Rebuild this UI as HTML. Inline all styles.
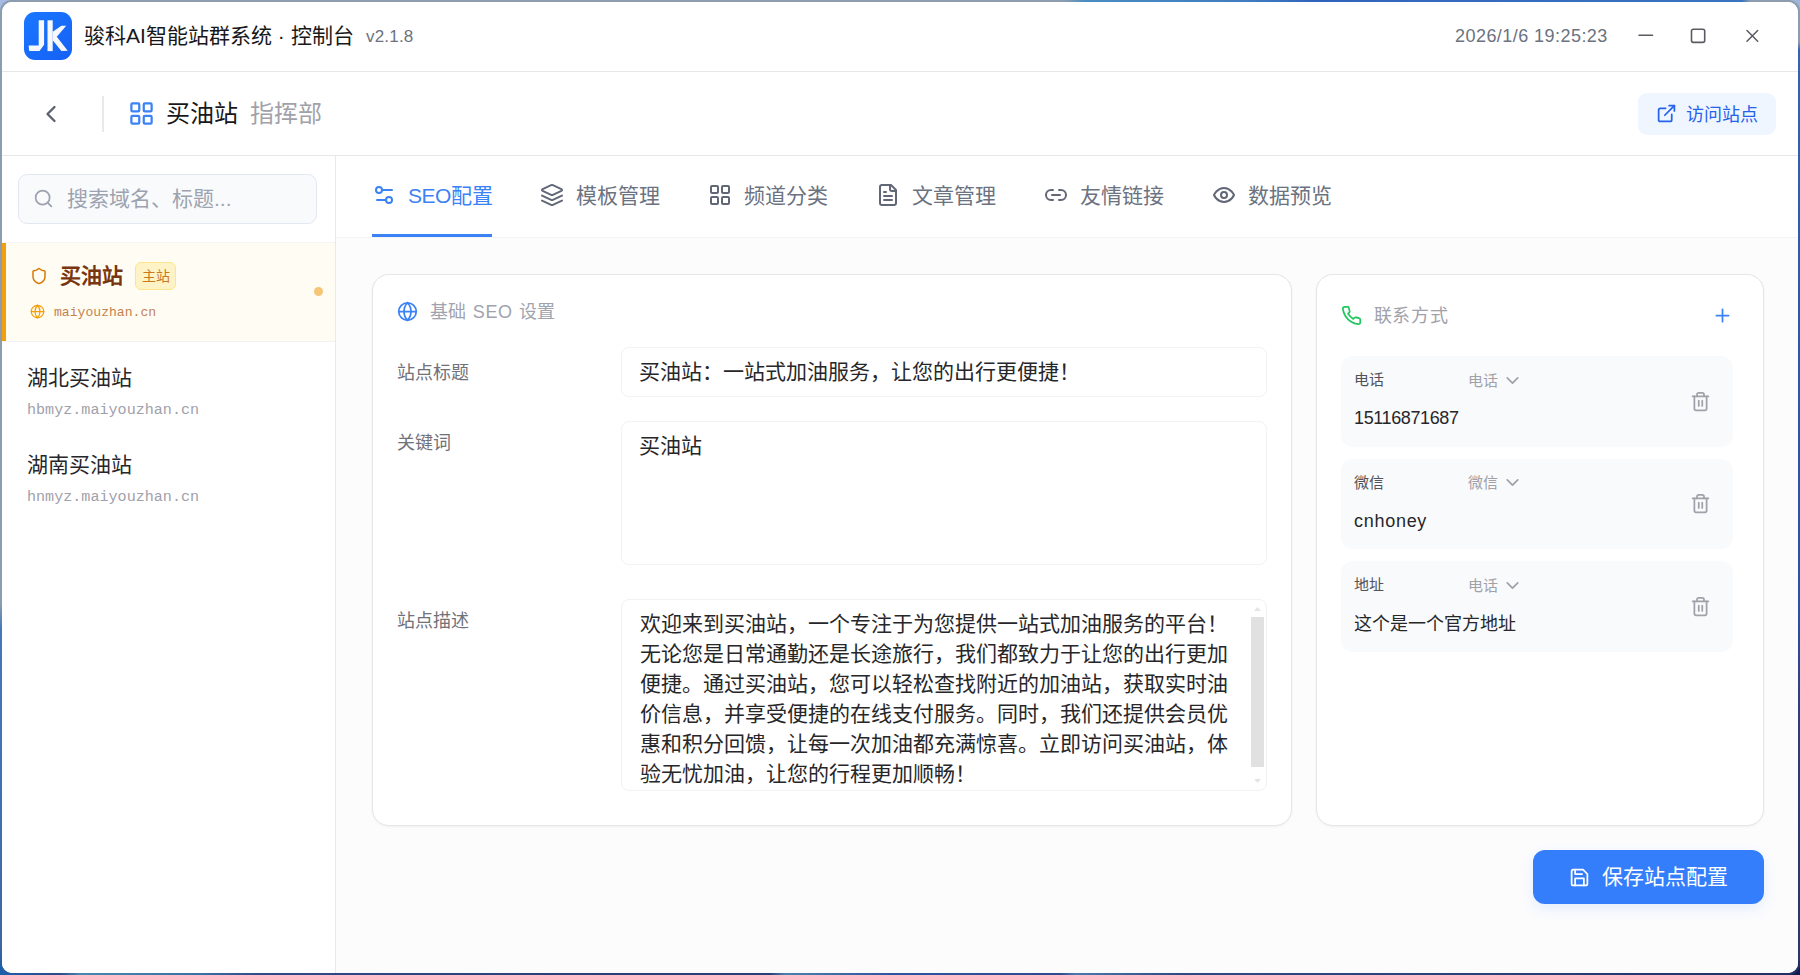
<!DOCTYPE html>
<html lang="zh-CN">
<head>
<meta charset="utf-8">
<title>骏科AI智能站群系统 · 控制台</title>
<style>
*{box-sizing:border-box;margin:0;padding:0}
html,body{width:1800px;height:975px;overflow:hidden}
body{font-family:"Liberation Sans",sans-serif;color:#18181b;position:relative;background:
 linear-gradient(#a5bbe3,#a5bbe3) 0 0/14px 14px no-repeat,
 linear-gradient(#9db5d8,#9db5d8) 100% 0/14px 14px no-repeat,
 linear-gradient(#1d5fa8,#1d5fa8) 0 100%/14px 14px no-repeat,
 linear-gradient(#0e1c52,#0e1c52) 100% 100%/14px 14px no-repeat,#fff}
.frame{left:0;top:0;width:1800px;height:975px;border-radius:11.5px;overflow:hidden}
.abs{position:absolute}
svg{display:block}
.ic{fill:none;stroke:currentColor;stroke-width:2;stroke-linecap:round;stroke-linejoin:round}
/* desktop wallpaper strips visible around window */
.bg-top{left:0;top:0;width:1800px;height:14px;background:linear-gradient(90deg,#8b9dae 0,#8b9dae 1065px,#4a8cc2 1085px,#3f7cc0 1250px,#2f62bb 1320px,#3468bd 1400px,#3a74c0 1742px,#8b9dae 1750px,#8b9dae 1800px)}
.bg-left{left:0;top:14px;width:14px;height:961px;background:linear-gradient(180deg,#8b9dae 0,#8b9dae 590px,#4478b8 615px,#4170b0 800px,#3f669f 930px,#1f5fa8 961px)}
.bg-right{left:1786px;top:14px;width:14px;height:961px;background:linear-gradient(180deg,#8b9dae 0,#8b9dae 28px,#3561b8 36px,#2f56b0 300px,#2e4fa6 600px,#2a3f7c 700px,#28366a 961px)}
.bg-bottom{left:0;top:961px;width:1800px;height:14px;background:linear-gradient(90deg,#1f5fa8 0,#2b4a8c 60px,#4a86b0 80px,#3a70a8 200px,#2c4a8c 260px,#2a3f78 600px,#2a3f78 770px,#4a80b0 785px,#2f55a0 890px,#2c4a90 1060px,#4a78b0 1075px,#2c4a86 1180px,#27407a 1500px,#222f63 1800px)}
.win{left:2px;top:2px;width:1796px;height:971px;background:#fff;border-radius:10px;overflow:hidden}
.t{position:absolute;white-space:nowrap;line-height:1}
</style>
</head>
<body>
<div class="abs frame">
<div class="abs bg-top"></div>
<div class="abs bg-left"></div>
<div class="abs bg-right"></div>
<div class="abs bg-bottom"></div>
</div>
<div class="abs win" id="win">

<div class="abs" style="left:0;top:0;width:1796px;height:70px;background:#fff;border-bottom:1px solid #e5e7eb"></div>
<svg class="abs" style="left:22px;top:10px" width="48" height="48" viewBox="0 0 48 48">
  <defs><linearGradient id="lg" x1="0" y1="0" x2="1" y2="1"><stop offset="0" stop-color="#1a78ff"/><stop offset="1" stop-color="#1560f6"/></linearGradient></defs>
  <rect width="48" height="48" rx="11" fill="url(#lg)"/>
  <polygon points="14.7,8.3 20.1,8.3 20.1,32.8 15.5,39.1 5.2,39.1 4.6,33.4 14.7,33.4" fill="#f7f8fb"/>
  <rect x="23.5" y="8.3" width="5.2" height="30.8" fill="#f7f8fb"/>
  <polygon points="28.7,19.8 37.4,13.8 42.2,13.8 32.8,24.7 28.7,26.5" fill="#f7f8fb"/>
  <polygon points="28.7,24.9 32.8,24.7 43.7,38.8 37.4,39.1 28.7,28.2" fill="#f7f8fb"/>
</svg>
<div class="t" style="left:82px;top:22px;font-size:21px;line-height:24px;color:#18181b">骏科AI智能站群系统 · 控制台</div>
<div class="t" style="left:364px;top:23px;font-size:17px;line-height:24px;color:#6b7280;letter-spacing:.2px">v2.1.8</div>
<div class="t" id="clock" style="left:1453px;top:22px;font-size:18px;line-height:24px;color:#6b7280;letter-spacing:.45px">2026/1/6 19:25:23</div>
<svg class="abs" style="left:1634px;top:24px;color:#5b5b63" width="18" height="18" viewBox="0 0 18 18"><path d="M3 9.3H16.5" fill="none" stroke="currentColor" stroke-width="1.6" stroke-linecap="round"/></svg>
<svg class="abs" style="left:1687px;top:24px;color:#5b5b63" width="18" height="18" viewBox="0 0 18 18"><rect x="2.5" y="3.2" width="13.2" height="13.2" rx="1.8" fill="none" stroke="currentColor" stroke-width="1.6"/></svg>
<svg class="abs" style="left:1741px;top:24px;color:#5b5b63" width="18" height="18" viewBox="0 0 18 18"><path d="M4 4.5 L14.7 15.2 M14.7 4.5 L4 15.2" fill="none" stroke="currentColor" stroke-width="1.5" stroke-linecap="round"/></svg>


<div class="abs" style="left:0;top:70px;width:1796px;height:84px;background:#fff;border-bottom:1px solid #e5e7eb"></div>
<svg class="abs ic" style="left:35px;top:98px;color:#5a6170" width="28" height="28" viewBox="0 0 24 24"><path d="m15 18-6-6 6-6"/></svg>
<div class="abs" style="left:100px;top:94px;width:2px;height:36px;background:#e7e9ed"></div>
<svg class="abs ic" style="left:126px;top:98.2px;color:#3b82f6" width="27" height="27" viewBox="0 0 24 24"><rect width="7" height="7" x="3" y="3" rx="1"/><rect width="7" height="7" x="14" y="3" rx="1"/><rect width="7" height="7" x="14" y="14" rx="1"/><rect width="7" height="7" x="3" y="14" rx="1"/></svg>
<div class="t" style="left:164px;top:96.4px;font-size:24px;line-height:32px;color:#18181b">买油站</div>
<div class="t" style="left:248px;top:96.4px;font-size:24px;line-height:32px;color:#a1a1aa">指挥部</div>
<div class="abs" style="left:1636px;top:91px;width:138px;height:42px;border-radius:9px;background:#eff6ff"></div>
<svg class="abs ic" style="left:1654px;top:101px;color:#2563eb" width="21" height="21" viewBox="0 0 24 24"><path d="M15 3h6v6"/><path d="M10 14 21 3"/><path d="M18 13v6a2 2 0 0 1-2 2H5a2 2 0 0 1-2-2V8a2 2 0 0 1 2-2h6"/></svg>
<div class="t" style="left:1684px;top:100.6px;font-size:18px;line-height:24px;color:#2563eb">访问站点</div>


<div class="abs" style="left:0;top:154px;width:334px;height:817px;background:#fff;border-right:1px solid #e7e9ee"></div>
<div class="abs" style="left:16px;top:172px;width:299px;height:50px;border-radius:9px;background:#f8fafc;border:1px solid #e2e8f0"></div>
<svg class="abs ic" style="left:31px;top:186px;color:#9ca3af" width="21" height="21" viewBox="0 0 24 24"><circle cx="11" cy="11" r="8"/><path d="m21 21-4.3-4.3"/></svg>
<div class="t" style="left:65px;top:185px;font-size:21px;line-height:24px;color:#9ca3af">搜索域名、标题...</div>

<div class="abs" style="left:0;top:240px;width:333px;height:100px;background:#fffdf3;border-top:1px solid #f4f5f7;border-bottom:1px solid #f1f2f5"></div>
<div class="abs" style="left:0;top:241px;width:4px;height:98px;background:#f59e0b"></div>
<svg class="abs ic" style="left:28px;top:264.5px;color:#d97706" width="18" height="18" viewBox="0 0 24 24"><path d="M20 13c0 5-3.5 7.5-7.66 8.95a1 1 0 0 1-.67-.01C7.5 20.5 4 18 4 13V6a1 1 0 0 1 1-1c2 0 4.5-1.2 6.24-2.72a1.17 1.17 0 0 1 1.52 0C14.51 3.81 17 5 19 5a1 1 0 0 1 1 1z"/></svg>
<div class="t" style="left:58px;top:262px;font-size:21px;line-height:24px;font-weight:bold;color:#78350f">买油站</div>
<div class="abs" style="left:133px;top:260px;width:41px;height:28px;border-radius:6px;background:#fef3c7;border:1px solid #fde68a"></div>
<div class="t" style="left:139.5px;top:264px;font-size:14px;line-height:20px;color:#c9781c">主站</div>
<svg class="abs ic" style="left:28px;top:302px;color:#f59e0b" width="15" height="15" viewBox="0 0 24 24"><circle cx="12" cy="12" r="10"/><path d="M12 2a14.5 14.5 0 0 0 0 20 14.5 14.5 0 0 0 0-20"/><path d="M2 12h20"/></svg>
<div class="t" style="left:52px;top:301.5px;font-family:'Liberation Mono',monospace;font-size:13.1px;line-height:18px;color:#c5824f">maiyouzhan.cn</div>
<div class="abs" style="left:312px;top:285px;width:9px;height:9px;border-radius:50%;background:#f7c577"></div>

<div class="t" style="left:25px;top:364px;font-size:21px;line-height:24px;color:#27272a">湖北买油站</div>
<div class="t" style="left:25px;top:397.5px;font-family:'Liberation Mono',monospace;font-size:15.1px;line-height:20px;color:#a1a1aa">hbmyz.maiyouzhan.cn</div>
<div class="t" style="left:25px;top:451px;font-size:21px;line-height:24px;color:#27272a">湖南买油站</div>
<div class="t" style="left:25px;top:484.5px;font-family:'Liberation Mono',monospace;font-size:15.1px;line-height:20px;color:#a1a1aa">hnmyz.maiyouzhan.cn</div>


<div class="abs" style="left:334px;top:154px;width:1462px;height:817px;background:#fcfcfd"></div>
<div class="abs" style="left:334px;top:154px;width:1462px;height:82px;background:#fff;border-bottom:1px solid #f3f4f6"></div>
<svg class="abs ic" style="left:370px;top:181px;color:#3b82f6" width="24" height="24" viewBox="0 0 24 24"><path d="M20 7h-9"/><path d="M14 17H5"/><circle cx="17" cy="17" r="3"/><circle cx="7" cy="7" r="3"/></svg>
<div class="t" style="left:406px;top:181.6px;font-size:21px;line-height:24px;color:#3b82f6"><span style="letter-spacing:-.55px">SEO</span>配置</div>
<svg class="abs ic" style="left:538px;top:181px;color:#616776" width="24" height="24" viewBox="0 0 24 24"><path d="m12.83 2.18a2 2 0 0 0-1.66 0L2.6 6.08a1 1 0 0 0 0 1.83l8.58 3.91a2 2 0 0 0 1.66 0l8.58-3.9a1 1 0 0 0 0-1.83Z"/><path d="m22 17.65-9.17 4.16a2 2 0 0 1-1.66 0L2 17.65"/><path d="m22 12.65-9.17 4.16a2 2 0 0 1-1.66 0L2 12.65"/></svg>
<div class="t" style="left:574px;top:181.6px;font-size:21px;line-height:24px;color:#6b7280">模板管理</div>
<svg class="abs ic" style="left:706px;top:181px;color:#616776" width="24" height="24" viewBox="0 0 24 24"><rect width="7" height="7" x="3" y="3" rx="1"/><rect width="7" height="7" x="14" y="3" rx="1"/><rect width="7" height="7" x="14" y="14" rx="1"/><rect width="7" height="7" x="3" y="14" rx="1"/></svg>
<div class="t" style="left:742px;top:181.6px;font-size:21px;line-height:24px;color:#6b7280">频道分类</div>
<svg class="abs ic" style="left:874px;top:181px;color:#616776" width="24" height="24" viewBox="0 0 24 24"><path d="M15 2H6a2 2 0 0 0-2 2v16a2 2 0 0 0 2 2h12a2 2 0 0 0 2-2V7Z"/><path d="M14 2v4a2 2 0 0 0 2 2h4"/><path d="M10 9H8"/><path d="M16 13H8"/><path d="M16 17H8"/></svg>
<div class="t" style="left:910px;top:181.6px;font-size:21px;line-height:24px;color:#6b7280">文章管理</div>
<svg class="abs ic" style="left:1042px;top:181px;color:#616776" width="24" height="24" viewBox="0 0 24 24"><path d="M9 17H7A5 5 0 0 1 7 7h2"/><path d="M15 7h2a5 5 0 1 1 0 10h-2"/><line x1="8" x2="16" y1="12" y2="12"/></svg>
<div class="t" style="left:1078px;top:181.6px;font-size:21px;line-height:24px;color:#6b7280">友情链接</div>
<svg class="abs ic" style="left:1210px;top:181px;color:#616776" width="24" height="24" viewBox="0 0 24 24"><path d="M2 12s3-7 10-7 10 7 10 7-3 7-10 7-10-7-10-7Z"/><circle cx="12" cy="12" r="3"/></svg>
<div class="t" style="left:1246px;top:181.6px;font-size:21px;line-height:24px;color:#6b7280">数据预览</div>
<div class="abs" style="left:370px;top:232px;width:120px;height:3px;background:#3b82f6"></div>

<div class="abs" style="left:370px;top:272px;width:920px;height:552px;border-radius:17px;background:#fff;border:1px solid #e5e6ea;box-shadow:0 1px 3px rgba(0,0,0,.05)"></div>
<svg class="abs ic" style="left:395px;top:299px;color:#3b82f6" width="21" height="21" viewBox="0 0 24 24"><circle cx="12" cy="12" r="10"/><path d="M12 2a14.5 14.5 0 0 0 0 20 14.5 14.5 0 0 0 0-20"/><path d="M2 12h20"/></svg>
<div class="t" style="left:427.5px;top:297.7px;font-size:18px;line-height:24px;color:#9fa3ad;letter-spacing:.72px">基础 SEO 设置</div>

<div class="t" style="left:395px;top:358.7px;font-size:18px;line-height:24px;color:#71717a">站点标题</div>
<div class="abs" style="left:619px;top:345px;width:646px;height:50px;border-radius:8px;background:#fff;border:1px solid #f1f2f5"></div>
<div class="t" style="left:637.3px;top:358px;font-size:21px;line-height:24px;color:#27272a">买油站：一站式加油服务，让您的出行更便捷！</div>

<div class="t" style="left:395px;top:428.7px;font-size:18px;line-height:24px;color:#71717a">关键词</div>
<div class="abs" style="left:619px;top:419px;width:646px;height:144px;border-radius:8px;background:#fff;border:1px solid #f1f2f5"></div>
<div class="t" style="left:637.3px;top:431.7px;font-size:21px;line-height:24px;color:#27272a">买油站</div>

<div class="t" style="left:395px;top:606.7px;font-size:18px;line-height:24px;color:#71717a">站点描述</div>
<div class="abs" style="left:619px;top:597px;width:646px;height:192px;border-radius:8px;background:#fff;border:1px solid #f1f2f5;overflow:hidden">
  <div class="t" style="left:18px;top:8.8px;font-size:21px;line-height:30px;color:#27272a;white-space:pre">欢迎来到买油站，一个专注于为您提供一站式加油服务的平台！
无论您是日常通勤还是长途旅行，我们都致力于让您的出行更加
便捷。通过买油站，您可以轻松查找附近的加油站，获取实时油
价信息，并享受便捷的在线支付服务。同时，我们还提供会员优
惠和积分回馈，让每一次加油都充满惊喜。立即访问买油站，体
验无忧加油，让您的行程更加顺畅！</div>
  <div class="abs" style="left:629px;top:17px;width:13px;height:150px;background:#e1e1e1"></div>
  <svg class="abs" style="left:629px;top:5px" width="13" height="8" viewBox="0 0 13 8"><path d="M3 6 L6.5 2 L10 6Z" fill="#e4e4e4"/></svg>
  <svg class="abs" style="left:629px;top:177px" width="13" height="8" viewBox="0 0 13 8"><path d="M3 2 L6.5 6 L10 2Z" fill="#e4e4e4"/></svg>
</div>

<div class="abs" style="left:1314px;top:272px;width:448px;height:552px;border-radius:17px;background:#fff;border:1px solid #e5e6ea;box-shadow:0 1px 3px rgba(0,0,0,.05)"></div>
<svg class="abs ic" style="left:1338.5px;top:303px;color:#22c55e" width="21" height="21" viewBox="0 0 24 24"><path d="M22 16.92v3a2 2 0 0 1-2.18 2 19.79 19.79 0 0 1-8.63-3.07 19.5 19.5 0 0 1-6-6 19.79 19.79 0 0 1-3.07-8.67A2 2 0 0 1 4.11 2h3a2 2 0 0 1 2 1.72 12.84 12.84 0 0 0 .7 2.81 2 2 0 0 1-.45 2.11L8.09 9.91a16 16 0 0 0 6 6l1.27-1.27a2 2 0 0 1 2.11-.45 12.84 12.84 0 0 0 2.81.7A2 2 0 0 1 22 16.92z"/></svg>
<div class="t" style="left:1371.5px;top:301.5px;font-size:18px;line-height:24px;color:#a1a1aa;letter-spacing:.9px">联系方式</div>
<svg class="abs ic" style="left:1710px;top:303px;color:#3b82f6" width="21" height="21" viewBox="0 0 24 24"><path d="M5 12h14"/><path d="M12 5v14"/></svg>
<div class="abs" style="left:1339px;top:354px;width:392px;height:90.5px;border-radius:12px;background:#f9fafb"></div>
<div class="t" style="left:1352px;top:368.2px;font-size:15px;line-height:20px;color:#52525b">电话</div>
<div class="t" style="left:1466px;top:368.7px;font-size:15px;line-height:20px;color:#a1a1aa">电话</div>
<svg class="abs ic" style="left:1499.5px;top:367.5px;color:#a1a1aa" width="21" height="21" viewBox="0 0 24 24"><path d="m6 9 6 6 6-6"/></svg>
<div class="t" style="left:1352px;top:404px;font-size:18px;line-height:24px;color:#27272a;letter-spacing:-.38px">15116871687</div>
<svg class="abs ic" style="left:1688px;top:389px;color:#a1a1aa" width="21" height="21" viewBox="0 0 24 24"><path d="M3 6h18"/><path d="M19 6v14c0 1-1 2-2 2H7c-1 0-2-1-2-2V6"/><path d="M8 6V4c0-1 1-2 2-2h4c1 0 2 1 2 2v2"/><line x1="10" x2="10" y1="11" y2="17"/><line x1="14" x2="14" y1="11" y2="17"/></svg>
<div class="abs" style="left:1339px;top:456.5px;width:392px;height:90.5px;border-radius:12px;background:#f9fafb"></div>
<div class="t" style="left:1352px;top:470.7px;font-size:15px;line-height:20px;color:#52525b">微信</div>
<div class="t" style="left:1466px;top:471.2px;font-size:15px;line-height:20px;color:#a1a1aa">微信</div>
<svg class="abs ic" style="left:1499.5px;top:470.0px;color:#a1a1aa" width="21" height="21" viewBox="0 0 24 24"><path d="m6 9 6 6 6-6"/></svg>
<div class="t" style="left:1352px;top:507.0px;font-size:18px;line-height:24px;color:#27272a;letter-spacing:.72px">cnhoney</div>
<svg class="abs ic" style="left:1688px;top:491.0px;color:#a1a1aa" width="21" height="21" viewBox="0 0 24 24"><path d="M3 6h18"/><path d="M19 6v14c0 1-1 2-2 2H7c-1 0-2-1-2-2V6"/><path d="M8 6V4c0-1 1-2 2-2h4c1 0 2 1 2 2v2"/><line x1="10" x2="10" y1="11" y2="17"/><line x1="14" x2="14" y1="11" y2="17"/></svg>
<div class="abs" style="left:1339px;top:559px;width:392px;height:90.5px;border-radius:12px;background:#f9fafb"></div>
<div class="t" style="left:1352px;top:573.2px;font-size:15px;line-height:20px;color:#52525b">地址</div>
<div class="t" style="left:1466px;top:573.7px;font-size:15px;line-height:20px;color:#a1a1aa">电话</div>
<svg class="abs ic" style="left:1499.5px;top:572.5px;color:#a1a1aa" width="21" height="21" viewBox="0 0 24 24"><path d="m6 9 6 6 6-6"/></svg>
<div class="t" style="left:1352px;top:609.5px;font-size:18px;line-height:24px;color:#27272a;">这个是一个官方地址</div>
<svg class="abs ic" style="left:1688px;top:594px;color:#a1a1aa" width="21" height="21" viewBox="0 0 24 24"><path d="M3 6h18"/><path d="M19 6v14c0 1-1 2-2 2H7c-1 0-2-1-2-2V6"/><path d="M8 6V4c0-1 1-2 2-2h4c1 0 2 1 2 2v2"/><line x1="10" x2="10" y1="11" y2="17"/><line x1="14" x2="14" y1="11" y2="17"/></svg>

<div class="abs" style="left:1531px;top:848px;width:231px;height:54px;border-radius:12px;background:#347efc;box-shadow:0 5px 14px rgba(59,130,246,.12)"></div>
<svg class="abs ic" style="left:1566.8px;top:865.2px;color:#fff" width="21" height="21" viewBox="0 0 24 24"><path d="M19 21H5a2 2 0 0 1-2-2V5a2 2 0 0 1 2-2h11l5 5v11a2 2 0 0 1-2 2z"/><polyline points="17 21 17 13 7 13 7 21"/><polyline points="7 3 7 8 15 8"/></svg>
<div class="t" style="left:1600px;top:863px;font-size:21px;line-height:24px;color:#fff">保存站点配置</div>

</div>
</body>
</html>
